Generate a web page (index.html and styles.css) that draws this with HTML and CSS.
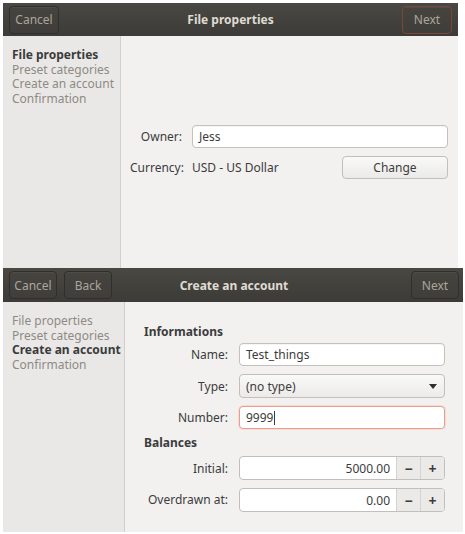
FILE: index.html
```html
<!DOCTYPE html>
<html>
<head>
<meta charset="utf-8">
<link rel="stylesheet" href="styles.css">
</head>
<body>
<div class="stack">
  <section class="window win-top">
    <header class="headerbar">
      <div class="hb-start"><button class="hbtn">Cancel</button></div>
      <div class="hb-title">File properties</div>
      <div class="hb-end"><button class="hbtn suggested">Next</button></div>
    </header>
    <div class="body">
      <nav class="sidebar">
        <div class="step active">File properties</div>
        <div class="step">Preset categories</div>
        <div class="step">Create an account</div>
        <div class="step">Confirmation</div>
      </nav>
      <main class="content center">
        <div class="props">
          <div class="lbl">Owner:</div>
          <div class="entry span2">Jess</div>
          <div class="lbl">Currency:</div>
          <div class="value">USD - US Dollar</div>
          <button class="btn">Change</button>
        </div>
      </main>
    </div>
  </section>

  <section class="window win-bottom">
    <header class="headerbar">
      <div class="hb-start"><button class="hbtn">Cancel</button><button class="hbtn">Back</button></div>
      <div class="hb-title">Create an account</div>
      <div class="hb-end"><button class="hbtn">Next</button></div>
    </header>
    <div class="body">
      <nav class="sidebar sb-wide">
        <div class="step">File properties</div>
        <div class="step">Preset categories</div>
        <div class="step active">Create an account</div>
        <div class="step">Confirmation</div>
      </nav>
      <main class="content">
        <div class="account">
          <div class="heading">Informations</div>
          <div class="lbl">Name:</div>
          <div class="entry">Test_things</div>
          <div class="lbl">Type:</div>
          <div class="combo"><span>(no type)</span><svg class="arrow" width="8" height="5" viewBox="0 0 8 5"><path d="M0 0 H8 L4 5 Z" fill="#2e2e2e"/></svg></div>
          <div class="lbl">Number:</div>
          <div class="entry focus">9999<span class="caret"></span></div>
          <div class="heading h2">Balances</div>
          <div class="lbl">Initial:</div>
          <div class="spin"><span class="spin-val">5000.00</span><span class="spin-btn">&minus;</span><span class="spin-btn">+</span></div>
          <div class="lbl">Overdrawn at:</div>
          <div class="spin"><span class="spin-val">0.00</span><span class="spin-btn">&minus;</span><span class="spin-btn">+</span></div>
        </div>
      </main>
    </div>
  </section>
</div>
</body>
</html>
```

FILE: styles.css
```css
* { box-sizing: border-box; }
html, body { margin: 0; padding: 0; background: #ffffff; }
body {
  font-family: "Noto Sans", "DejaVu Sans", sans-serif;
  font-size: 12px;
  color: #3c3c3c;
}
.stack {
  padding: 3px 0 0 3px;
  display: flex;
  flex-direction: column;
  align-items: flex-start;
}
.window {
  display: flex;
  flex-direction: column;
  background: #f2f1f0;
}
.win-top { width: 455px; height: 265px; }
.win-bottom { width: 460px; height: 264px; }

.headerbar {
  display: grid;
  grid-template-columns: 1fr auto 1fr;
  align-items: center;
  background: linear-gradient(#4a4843, #3d3b37);
  padding: 0 6px;
  flex: none;
}
.win-top .headerbar { height: 33px; }
.win-bottom .headerbar { height: 34px; padding-right: 4px; }
.hb-start { display: flex; gap: 7px; }
.hb-end { display: flex; justify-content: flex-end; }
.hb-title {
  color: #dfdbd2;
  font-weight: bold;
  font-size: 12px;
  text-align: center;
}
.hbtn {
  font: inherit;
  font-size: 12px;
  color: #aaa69e;
  background: linear-gradient(#46443f, #403e3a);
  border: 1px solid #302f2b;
  border-radius: 4px;
  height: 28px;
  width: 50px;
  padding: 0;
  box-shadow: inset 0 1px rgba(255,255,255,0.05);
}
.win-bottom .hbtn { width: 48px; height: 28px; }
.hbtn.suggested { border-color: #7b4538; }

.body { display: flex; flex: 1; min-height: 0; }
.sidebar {
  width: 118px;
  background: #e9e8e6;
  border-right: 1px solid #d3d0cc;
  padding: 12px 0 0 9px;
  flex: none;
}
.sb-wide { width: 122px; padding-top: 12px; }
.step {
  color: #8e8a84;
  font-size: 12px;
  line-height: 14.5px;
  white-space: nowrap;
}
.step.active { color: #3c3c3c; font-weight: bold; }

.content { flex: 1; }
.content.center { display: flex; align-items: center; }

.props {
  width: 100%;
  display: grid;
  grid-template-columns: 52px 1fr 106px;
  column-gap: 10px;
  row-gap: 8px;
  align-items: center;
  padding: 0 10px 0 9px;
}
.lbl { text-align: right; white-space: nowrap; color: #3c3c3c; }
.value { color: #3c3c3c; }
.span2 { grid-column: span 2; }

.entry {
  height: 23px;
  background: #ffffff;
  border: 1px solid #c4c0ba;
  border-radius: 4px;
  padding: 0 6px;
  display: flex;
  align-items: center;
  color: #3c3c3c;
  box-shadow: inset 0 1px rgba(0,0,0,0.04);
}
.entry.focus {
  border-color: #ec9e8a;
  box-shadow: 0 0 0 1px rgba(240,160,140,0.25);
}
.caret {
  display: inline-block;
  width: 1px;
  height: 14px;
  background: #3c3c3c;
  margin-left: 1px;
}
.btn {
  font: inherit;
  font-size: 12px;
  color: #3c3c3c;
  height: 23px;
  background: linear-gradient(#f9f9f8, #ebeae8);
  border: 1px solid #c2beb8;
  border-radius: 4px;
}

.account {
  display: grid;
  grid-template-columns: 84px 206px;
  column-gap: 11px;
  row-gap: 8px;
  align-items: center;
  padding: 20px 0 0 19px;
}
.heading {
  grid-column: span 2;
  font-weight: bold;
  color: #3c3c3c;
  height: 13px;
  line-height: 19px;
}
.heading.h2 { margin: -4px 0 2px; }
.combo {
  height: 24px;
  background: linear-gradient(#f9f9f8, #ecebe9);
  border: 1px solid #c2beb8;
  border-radius: 4px;
  padding: 0 6px 0 6px;
  display: flex;
  align-items: center;
  justify-content: space-between;
}
.arrow { margin-right: 1px; }
.spin {
  height: 24px;
  display: flex;
  border: 1px solid #c2beb8;
  border-radius: 4px;
  background: #fff;
  overflow: hidden;
}
.spin + .lbl { margin-top: -1px; }
.spin-val {
  flex: 1;
  text-align: right;
  padding-right: 6px;
  display: flex;
  align-items: center;
  justify-content: flex-end;
}
.spin-btn {
  width: 24px;
  display: flex;
  align-items: center;
  justify-content: center;
  background: #ebeae8;
  border-left: 1px solid #d6d3cf;
  font-weight: bold;
  font-size: 14px;
  color: #3c3c3c;
}
```
